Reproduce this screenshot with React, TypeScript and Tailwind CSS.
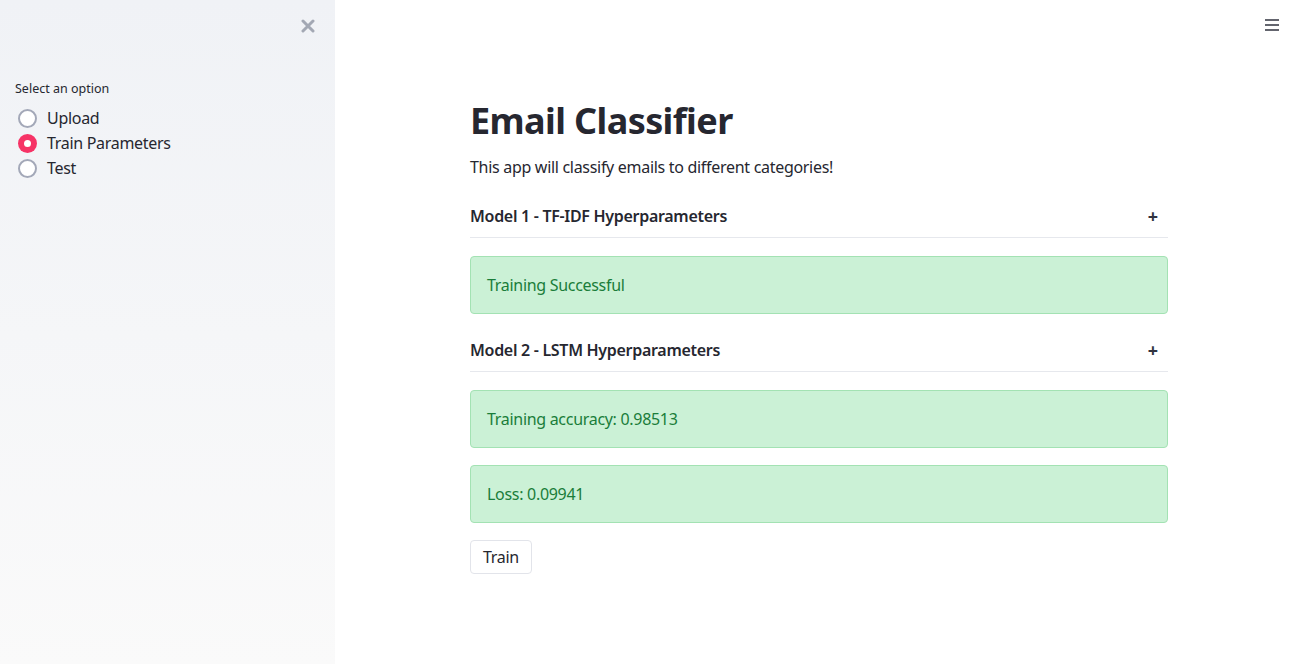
import React from "react";

const font = { fontFamily: '"Noto Sans", "Open Sans", sans-serif' };

function Radio({ label, checked }: { label: string; checked?: boolean }) {
  return (
    <div className="flex items-center h-[25px]">
      {checked ? (
        <span className="w-[19px] h-[19px] rounded-full bg-[#f63366] flex items-center justify-center ml-[3px]">
          <span className="w-[7px] h-[7px] rounded-full bg-white" />
        </span>
      ) : (
        <span className="w-[19px] h-[19px] rounded-full border-2 border-[#a3a8b8] bg-white ml-[3px]" />
      )}
      <span className="ml-[10px] text-[16px] tracking-[-0.3px] text-[#262730]">{label}</span>
    </div>
  );
}

function Expander({ title }: { title: string }) {
  return (
    <div className="flex items-center justify-between h-[43px] border-b border-[#e6e8ed]">
      <span className="text-[16px] font-semibold tracking-[-0.3px] text-[#262730]">{title}</span>
      <span className="text-[18px] font-bold text-[#31333f] mr-[10px] leading-none">+</span>
    </div>
  );
}

function Success({ text }: { text: string }) {
  return (
    <div className="h-[58px] rounded-[4px] border border-[#a3e2b3] bg-[#cbf1d6] text-[#1a7d3a] text-[16px] tracking-[-0.3px] flex items-center px-[16px]">
      {text}
    </div>
  );
}

export default function App() {
  return (
    <div className="flex w-[1299px] h-[664px] overflow-hidden bg-white text-[#262730]" style={font}>
      <aside className="w-[335px] h-full bg-gradient-to-b from-[#f0f2f6] to-[#fafafa] flex flex-col">
        <div className="flex justify-end pr-[20px] pt-[15px] h-[80px]">
          <svg width="14" height="14" viewBox="0 0 14 14" className="mt-[4px]">
            <path d="M2 2 L12 12 M12 2 L2 12" stroke="#a3a8b4" strokeWidth="3" strokeLinecap="round" />
          </svg>
        </div>
        <div className="px-[15px]">
          <div className="text-[12.5px] text-[#262730] mb-[7px]">Select an option</div>
          <Radio label="Upload" />
          <Radio label="Train Parameters" checked />
          <Radio label="Test" />
        </div>
      </aside>
      <main className="flex-1 relative">
        <div className="absolute right-[20px] top-[19px]">
          <svg width="14" height="12" viewBox="0 0 14 12">
            <path d="M0 1 H14 M0 6 H14 M0 11 H14" stroke="#31333f" strokeWidth="1.6" />
          </svg>
        </div>
        <div className="w-[698px] ml-[135px] pt-[98px]">
          <h1 className="text-[36px] font-bold leading-[46px] tracking-[-0.6px] text-[#262730]">Email Classifier</h1>
          <p className="text-[16px] mt-[11px] leading-[24px] tracking-[-0.3px]">This app will classify emails to different categories!</p>
          <div className="mt-[16px]">
            <Expander title="Model 1 - TF-IDF Hyperparameters" />
          </div>
          <div className="mt-[18px]">
            <Success text="Training Successful" />
          </div>
          <div className="mt-[15px]">
            <Expander title="Model 2 - LSTM Hyperparameters" />
          </div>
          <div className="mt-[18px] flex flex-col gap-[17px]">
            <Success text="Training accuracy: 0.98513" />
            <Success text="Loss: 0.09941" />
          </div>
          <button className="mt-[17px] h-[34px] px-[12px] rounded-[4px] border border-[#e2e4ea] bg-white text-[16px] tracking-[-0.3px] text-[#262730]">
            Train
          </button>
        </div>
      </main>
    </div>
  );
}
